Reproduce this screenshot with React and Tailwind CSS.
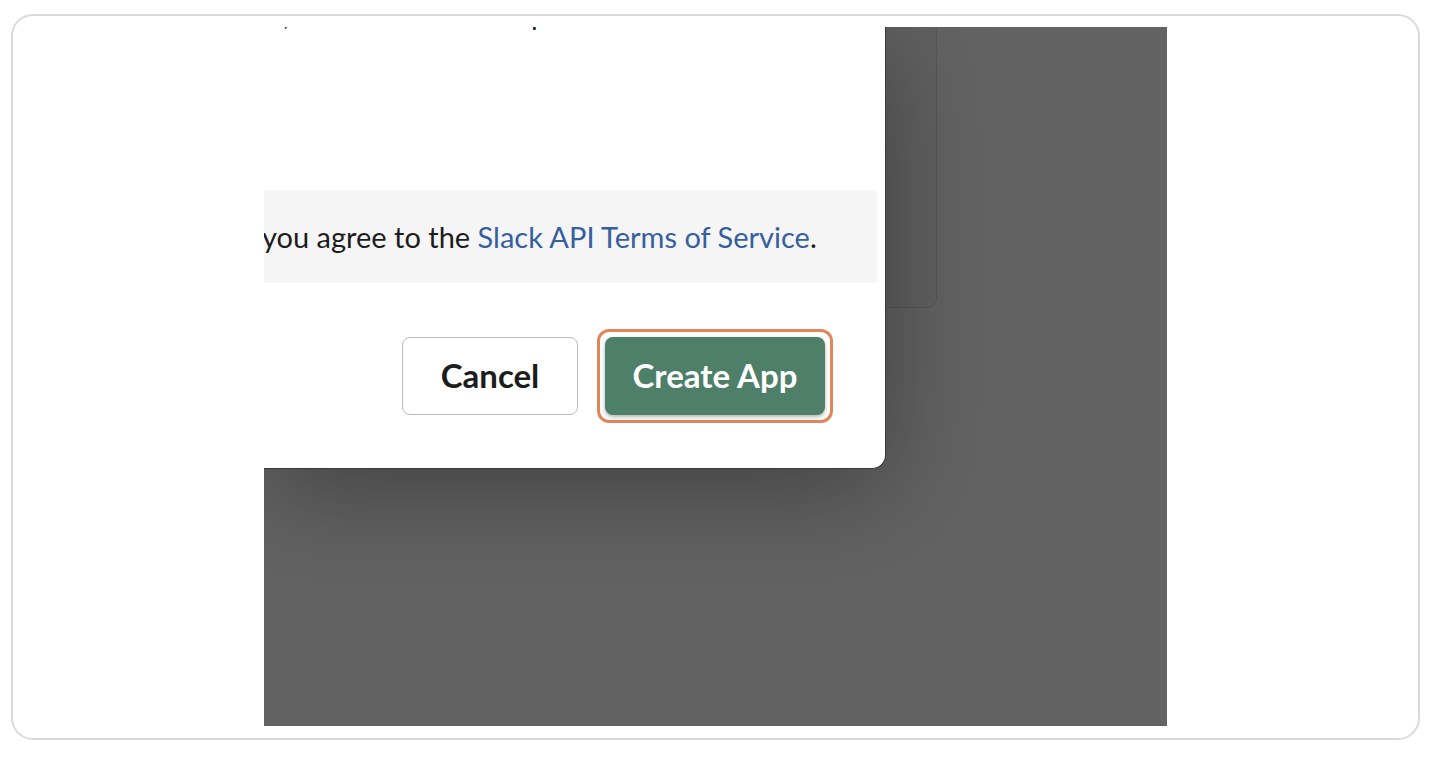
export default function App() {
  return (
    <div className="w-[1434px] h-[760px] bg-white pt-[14px] pl-[11px] font-['Lato','Noto_Sans',sans-serif]">
      <div className="w-[1409px] h-[726px] rounded-[22px] border-2 border-[#dadada] flex justify-center pt-[11px]">
        {/* screenshot area */}
        <div className="relative w-[903px] h-[699px] bg-[#636363] overflow-hidden">
          {/* dimmed panel behind the dialog */}
          <div className="absolute left-0 top-[-10px] w-[673px] h-[291px] rounded-br-[10px] border border-[#575757] bg-[#616161]" />

          {/* dialog */}
          <div className="absolute left-0 top-0 w-[622px] h-[442px] bg-white rounded-br-[14px] border-b border-r border-[#3a3a3a] shadow-[0_20px_110px_rgba(0,0,0,0.35)] flex flex-col overflow-hidden">
            {/* previous line, cut off at the top */}
            <div className="h-[4px] overflow-hidden">
              <p className="-mt-[28px] flex text-[29px] leading-[30px] text-[#1d1c1d] whitespace-nowrap">
                <span className="-ml-[26px]">Bot,</span>
                <span className="ml-[128px]">it will help</span>
              </p>
            </div>

            <div className="mt-[159px] mr-[8px] h-[93px] bg-[#f5f5f5] flex items-center overflow-hidden">
              <p className="-ml-[2px] text-[29px] text-[#1d1c1d] whitespace-nowrap">
                you agree to the <span className="text-[#355f9e]">Slack API Terms of Service</span>.
              </p>
            </div>

            <div className="mt-[54px] flex items-center gap-[27px] pl-[138px]">
              <button className="w-[176px] h-[78px] rounded-[8px] border-[1.5px] border-[#bcbcbc] bg-white text-[33px] font-bold text-[#1d1c1d]">
                Cancel
              </button>
              <div className="rounded-[12px] border-[3px] border-[#e0865b] p-[5px] -m-[8px]">
                <button className="w-[220px] h-[78px] rounded-[8px] bg-[#4e7f68] text-[33px] font-bold text-white shadow-[0_2px_4px_rgba(0,0,0,0.3)]">
                  Create App
                </button>
              </div>
            </div>
          </div>
        </div>
      </div>
    </div>
  );
}
